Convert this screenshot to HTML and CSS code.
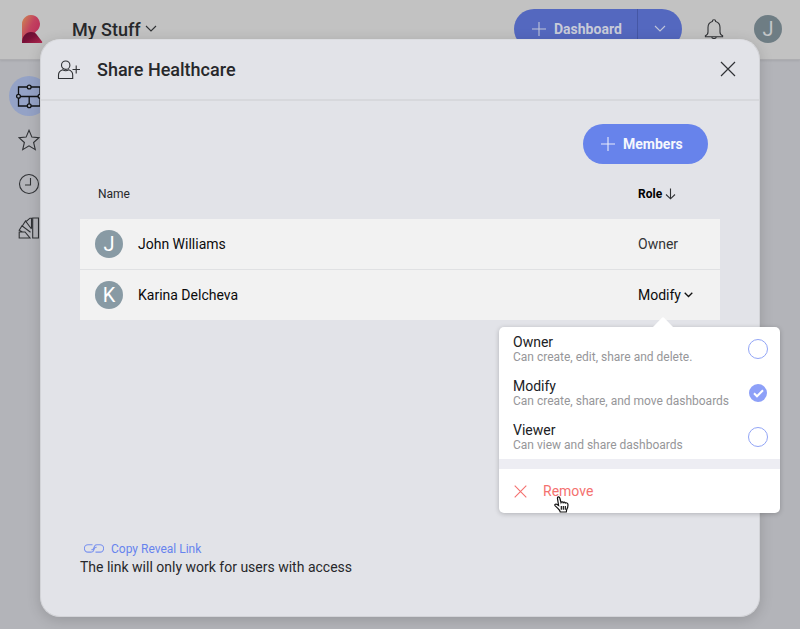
FILE: index.html
```html
<!DOCTYPE html>
<html lang="en">
<head>
<meta charset="utf-8">
<title>Share Healthcare</title>
<link rel="stylesheet" href="styles.css">
</head>
<body>
<header class="topbar">
  <svg class="logo" width="21" height="29" viewBox="0 0 21 29">
    <defs>
      <linearGradient id="lg1" x1="0" y1="0" x2="1" y2=".8"><stop offset="0" stop-color="#cf8a52"/><stop offset=".5" stop-color="#c2425f"/><stop offset="1" stop-color="#b92858"/></linearGradient>
      <linearGradient id="lg2" x1="0" y1="0" x2="1" y2="1"><stop offset="0" stop-color="#5c0e30"/><stop offset=".5" stop-color="#7a1038"/><stop offset="1" stop-color="#b02a50"/></linearGradient>
    </defs>
    <path d="M0 28V9a9 9 0 1 1 14 7.500L8 24Z" fill="url(#lg1)"/>
    <path d="M0 28c0-7 4-11 9-11 3 0 5 1 6 3l5 6.500c.6.900.2 1.500-.8 1.500Z" fill="url(#lg2)"/>
  </svg>
  <div class="workspace">My Stuff</div>
  <svg class="chev-lg" width="12" height="8" viewBox="0 0 12 8"><path d="M1 1l5 5 5-5"/></svg>
  <div class="new-dash">
    <svg width="14" height="14" viewBox="0 0 14 14"><path d="M7 0v14M0 7h14"/></svg>
    <span class="dash-label">Dashboard</span>
    <span class="dash-more"><svg width="12" height="8" viewBox="0 0 12 8"><path d="M1 1l5 5 5-5"/></svg></span>
  </div>
  <svg class="bell" width="20" height="21" viewBox="0 0 20 21"><path d="M8.300 2.500a1.700 1.700 0 0 1 3.400 0c2.800.8 4.300 3 4.300 6v4.500c0 2 .8 3 2.600 3.700v1H1.400v-1C3.200 16 4 15 4 13V8.500c0-3 1.500-5.200 4.300-6ZM7.500 17.700c.5 2.600 4.500 2.600 5 0"/></svg>
  <div class="avatar dim">J</div>
</header>
<nav class="sidebar">
  <div class="nav-item active"><svg width="26" height="26" viewBox="0 0 26 26"><path d="M2.500 4h21.500v19H2.500zM2.500 13.500H24M13.200 13.500V23"/><g class="knob"><circle cx="13.200" cy="4" r="1.900"/><circle cx="2.500" cy="13.200" r="1.900"/><circle cx="24" cy="13.200" r="1.900"/><circle cx="13.200" cy="22.700" r="1.900"/></g></svg></div>
  <div class="nav-item"><svg width="22" height="22" viewBox="0 0 22 22"><path d="M11 1.300l2.900 6.800 7.100.6-5.400 4.800 1.700 7.100-6.300-3.800-6.300 3.800 1.700-7.100L1 8.700l7.100-.6Z"/></svg></div>
  <div class="nav-item"><svg width="22" height="22" viewBox="0 0 22 22"><circle cx="11" cy="11" r="9.500"/><path d="M12.500 5v7H7"/></svg></div>
  <div class="nav-item"><svg width="22" height="22" viewBox="0 0 22 22"><path d="M14.700 1h5.800v20h-5.800zM1.200 15H7l5 6H1.200zM4.500 15L1.200 13.300 4 8.700l8.500 6.500M4.300 9L7.500 4l6 8M7.500 5l4.500-3.800h1.500v10"/></svg></div>
</nav>

<main class="dialog">
  <div class="dialog-head">
    <svg class="person" width="24" height="20" viewBox="0 0 24 20"><circle cx="8.700" cy="5.200" r="4.200"/><path d="M1.500 18.500V15c0-2.500 1.600-4.300 4.200-5.200 1.800 1.200 4.200 1.200 6 0 2.600.9 4 2.700 4 5.200v3.500ZM19.200 5.500v8M15.500 9.500H23"/></svg>
    <h1>Share Healthcare</h1>
    <svg class="close" width="16" height="16" viewBox="0 0 16 16"><path d="M1 1l14 14M15 1L1 15"/></svg>
  </div>
  <div class="dialog-body">
    <button class="members"><svg width="14" height="14" viewBox="0 0 14 14"><path d="M7 0v14M0 7h14"/></svg><span>Members</span></button>
    <div class="table-head">
      <span class="col-name">Name</span>
      <span class="col-role">Role</span>
      <svg width="11" height="12" viewBox="0 0 11 12"><path d="M5.500.5v10M1 6.500l4.500 4.300L10 6.500"/></svg>
    </div>
    <div class="row"><div class="avatar">J</div><span class="member">John Williams</span><span class="role-text">Owner</span></div>
    <div class="row"><div class="avatar">K</div><span class="member">Karina Delcheva</span><span class="role-pick">Modify</span><svg class="role-chev" width="9" height="6" viewBox="0 0 9 6"><path d="M.7.800l3.800 3.700L8.300.800"/></svg></div>
    <div class="link-area">
      <div class="copy"><svg width="20" height="9" viewBox="0 0 20 9"><path d="M7.300 5.800h1C9.500 5.800 10 3 10.800 1.800 11.300 1 12 .8 13 .8h3a3.600 3.600 0 0 1 0 7.300h-4.500M12.700 3.200h-1C10.500 3.200 10 6 9.200 7.200 8.700 8 8 8.100 7 8.100H4A3.600 3.600 0 0 1 4 .8h4.500"/></svg><span>Copy Reveal Link</span></div>
      <p>The link will only work for users with access</p>
    </div>
  </div>
</main>

<div class="menu">
  <svg class="menu-tip" width="20" height="10" viewBox="0 0 20 10"><path d="M0 10L8.700 1q1.300-1.300 2.600 0L20 10Z"/></svg>
  <div class="option"><div class="opt-text"><div class="opt-title">Owner</div><div class="opt-desc">Can create, edit, share and delete.</div></div><span class="radio"></span></div>
  <div class="option"><div class="opt-text"><div class="opt-title">Modify</div><div class="opt-desc">Can create, share, and move dashboards</div></div><span class="radio on"><svg width="11" height="9" viewBox="0 0 11 9"><path d="M1 4.300l3 3L10 1.300"/></svg></span></div>
  <div class="option"><div class="opt-text"><div class="opt-title">Viewer</div><div class="opt-desc">Can view and share dashboards</div></div><span class="radio"></span></div>
  <div class="divider"></div>
  <div class="remove"><svg width="13" height="13" viewBox="0 0 13 13"><path d="M.7.700l11.600 11.600M12.300.700L.7 12.300"/></svg><span>Remove</span></div>
  <svg class="cursor" width="15" height="17" viewBox="0 0 15 17"><path d="M4.600 9.500L3.500 2.600C3.200.6 5.300.2 5.800 2L7 6.500c.4-1 1.900-.9 2.200.1.500-.7 1.800-.5 2.100.4 1-.6 2.400 0 2.600 1.200.3 2.400-.1 3.700-1.200 5.300L12.300 16H6.200l-.6-1.600C4.300 12.500 2.800 11.200 1.200 9.900.2 8.900 1.400 7.500 2.700 8.300Z"/><path d="M7.300 10v3.700M9.300 10v3.700M11.300 10v3.700"/></svg>
</div>
</body>
</html>
```

FILE: styles.css
```css
* { box-sizing: border-box; }
body {
  margin: 0;
  width: 800px;
  height: 629px;
  overflow: hidden;
  position: relative;
  background: #b3b4b9;
  font-family: Roboto, "Liberation Sans", sans-serif;
  color: #27282b;
}
svg { display: block; flex: none; fill: none; stroke: #303235; stroke-width: 1.1; }
span, .workspace, h1, p, .opt-title, .opt-desc { white-space: nowrap; }

.topbar {
  height: 60px;
  display: flex;
  align-items: flex-start;
  background: #c2c2c2;
  border-bottom: 1px solid #adadb0;
  box-shadow: 0 1px 2px rgba(0, 0, 0, .08);
}
.logo { margin: 15px 0 0 22px; stroke: none; }
.workspace { margin: 18px 0 0 29px; width: 69px; font-size: 18px; line-height: 24px; font-weight: 500; }
.chev-lg { margin: 25px 0 0 4px; }
.new-dash {
  display: flex;
  align-items: center;
  width: 168px;
  height: 40px;
  margin: 9px 0 0 357px;
  padding-left: 18px;
  border-radius: 20px;
  background: #5468bf;
  color: #c8cbd8;
}
.new-dash svg { stroke: #c0c5da; }
.dash-label { margin-left: 8px; width: 83px; font-size: 14px; font-weight: 700; }
.dash-more { display: flex; align-items: center; height: 40px; width: 45px; padding-left: 16px; border-left: 1px solid #4557a5; }
.bell { margin: 19px 0 0 22px; }
.avatar {
  width: 28px;
  height: 28px;
  flex: none;
  border-radius: 50%;
  background: #889aa4;
  color: #fff;
  font-size: 20px;
  line-height: 28px;
  text-align: center;
}
.topbar .avatar { margin: 15px 0 0 30px; }
.dim { background: #6e7d84; color: #c3c6c8; }

.sidebar { display: flex; flex-direction: column; width: 58px; padding: 16px 0 0 9px; gap: 4px; }
.nav-item { width: 40px; height: 40px; border-radius: 50%; display: flex; align-items: center; justify-content: center; }
.active { background: #94a2c6; }
.active svg { stroke: #111316; stroke-width: 1.3; }
.knob { fill: #a1a9be; }

.dialog {
  position: absolute;
  left: 40px;
  top: 39px;
  width: 720px;
  height: 578px;
  border-radius: 20px;
  border: 1px solid #d3d4d8;
  border-top-color: #dcdde1;
  background: #e2e3e8;
  box-shadow: 0 3px 14px rgba(0, 0, 0, .16);
}
.dialog-head { display: flex; align-items: flex-start; height: 61px; border-bottom: 2px solid #d7d8dc; }
.person { margin: 20px 0 0 16px; }
h1 { margin: 18px 0 0 16px; width: 139px; font-size: 18px; line-height: 24px; font-weight: 500; }
.close { margin: 21px 0 0 484px; stroke-width: 1.2; }
.dialog-body { display: flex; flex-direction: column; padding: 23px 39px 0; }
.members {
  display: flex;
  align-items: center;
  align-self: flex-end;
  width: 125px;
  height: 40px;
  margin-right: 12px;
  padding: 0 0 0 18px;
  gap: 8px;
  border: 0;
  border-radius: 20px;
  background: #6783eb;
  color: #f6f7fd;
  font: 700 14px Roboto, sans-serif;
}
.members svg { stroke: #e9ecfb; }
.table-head { display: flex; align-items: center; height: 55px; padding: 5px 0 0 18px; font-size: 12px; }
.col-name { width: 540px; }
.col-role { width: 27px; font-weight: 700; color: #000; }
.row { display: flex; align-items: center; height: 50px; padding-left: 15px; background: #f2f2f2; font-size: 14px; color: #0b0b0c; }
.row + .row { height: 51px; border-top: 1px solid #e0e1e3; }
.member { margin-left: 15px; width: 500px; }
.role-text { color: #333436; }
.role-pick { width: 43px; }
.role-chev { margin-left: 3px; stroke: #111; stroke-width: 1.3; }
.link-area { margin-top: 220px; }
.copy { display: flex; align-items: center; height: 17px; padding-left: 4px; gap: 7px; font-size: 12px; color: #6783ee; }
.copy svg { stroke: #7a92ee; }
p { margin: 1px 0 0; font-size: 14px; line-height: 19px; }

.menu {
  position: absolute;
  left: 499px;
  top: 327px;
  width: 281px;
  height: 186px;
  border-radius: 5px;
  background: #fff;
  box-shadow: 0 1px 5px rgba(0, 0, 0, .22);
}
.menu-tip { position: absolute; left: 154px; top: -10px; stroke: none; fill: #fff; }
.option { display: flex; align-items: center; justify-content: space-between; height: 44px; padding: 0 12px 0 14px; }
.opt-text { padding-top: 2px; }
.opt-title { font-size: 14px; line-height: 15px; color: #202124; }
.opt-desc { font-size: 12px; line-height: 15px; color: #969699; }
.radio { width: 20px; height: 20px; border: 1.500px solid #92a5f6; border-radius: 50%; display: flex; align-items: center; justify-content: center; }
.on { width: 18px; height: 18px; border: 0; margin-right: 1px; background: #8da0f8; }
.on svg { stroke: #fff; stroke-width: 2; }
.divider { height: 10px; background: #ededf3; }
.remove { display: flex; align-items: center; gap: 16px; height: 44px; padding-left: 15px; font-size: 14px; color: #f4716f; }
.remove svg { stroke: #f4716f; }
.cursor { position: absolute; left: 55px; top: 169px; fill: #fff; stroke: #111; stroke-width: 1.2; }
```
